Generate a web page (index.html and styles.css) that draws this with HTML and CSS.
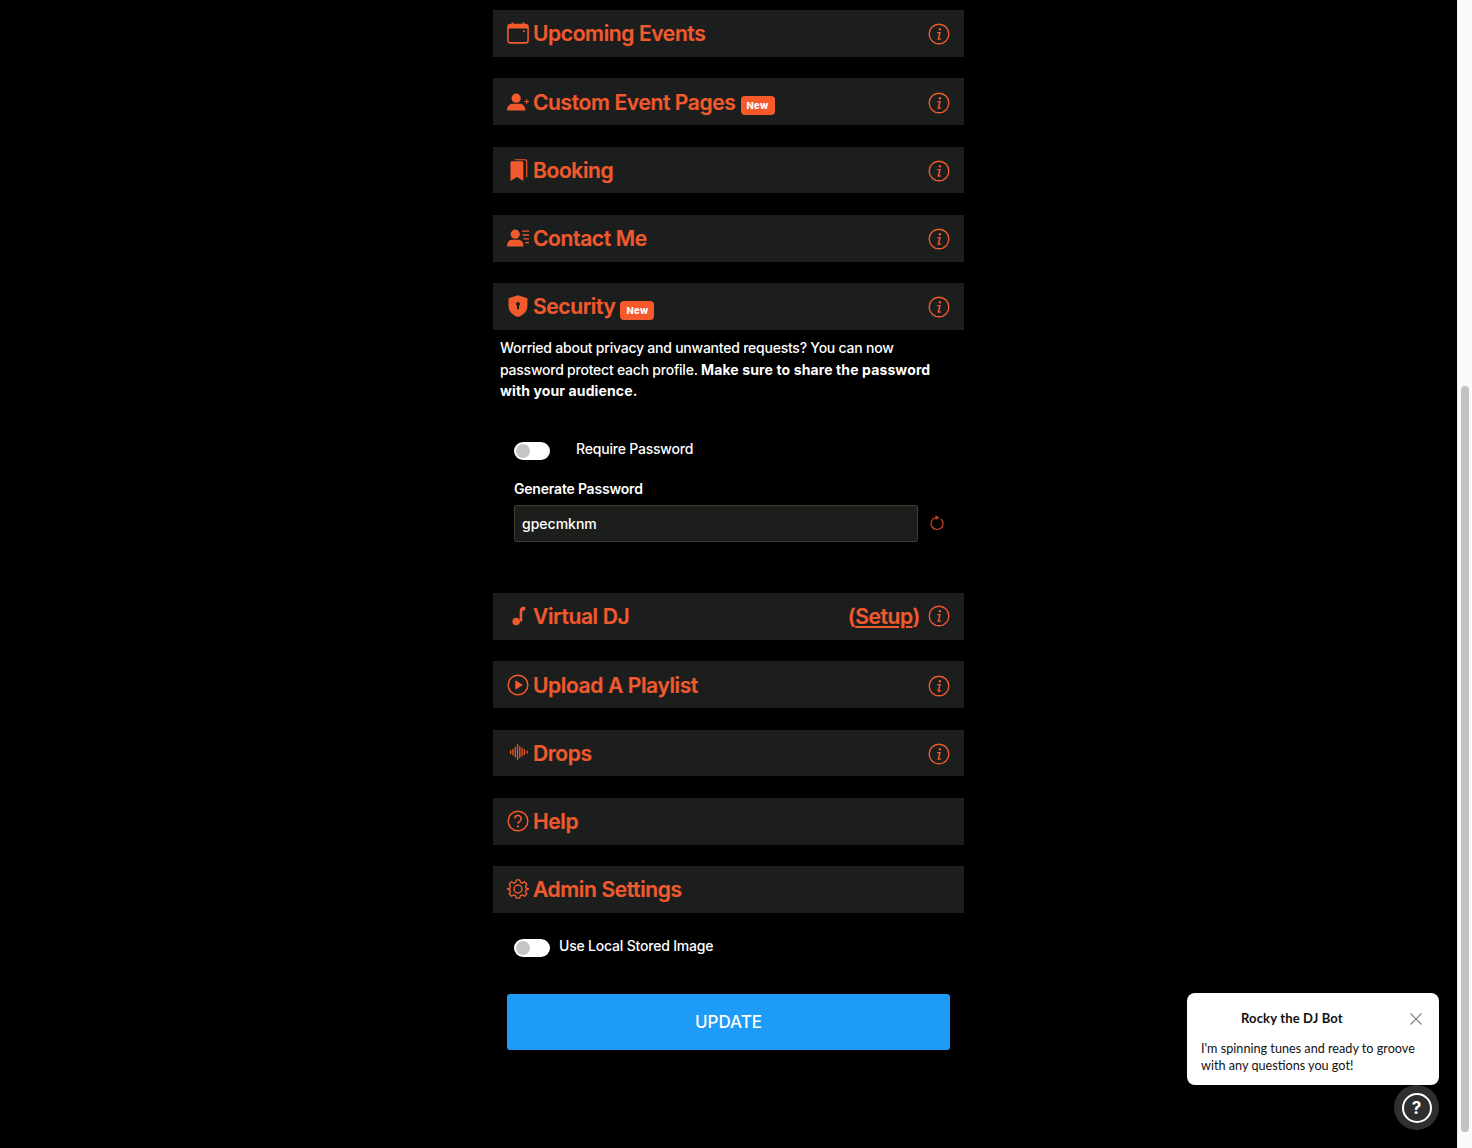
FILE: index.html
```html
<!DOCTYPE html>
<html lang="en">
<head>
<meta charset="utf-8">
<title>Profile settings</title>
<link rel="stylesheet" href="styles.css">
</head>
<body>
<div class="app">
  <main class="page">
    <div class="column">
      <section class="row">
        <div class="row-title">
          <svg class="ico" viewBox="0 0 24 24"><rect x="1" y="3" width="22" height="19.800" rx="2.500" fill="none" stroke="currentColor" stroke-width="1.700"/><path d="M1 7V4.500A2.500 2.500 0 0 1 3.500 2H5V.5h2V2h10V.5h2V2h1.500A2.500 2.500 0 0 1 23 4.500V7z" fill="currentColor"/><circle cx="18.500" cy="10" r="1.100" fill="currentColor"/></svg>
          <h2>Upcoming Events</h2>
        </div>
        <svg class="info" viewBox="0 0 24 24"><circle cx="12" cy="12" r="10.700" fill="none" stroke="currentColor" stroke-width="1.500"/><circle cx="13" cy="6.800" r="1.300" fill="currentColor"/><path d="M10 10.500h3l-1.700 7h2.600" fill="none" stroke="currentColor" stroke-width="1.600"/></svg>
      </section>
      <section class="row">
        <div class="row-title">
          <svg class="ico" viewBox="0 0 24 24"><circle cx="10" cy="7.800" r="5" fill="currentColor"/><path d="M0 21.300c0-5 3-7.500 6-7.500h8c3 0 6 2.500 6 7.500z" fill="currentColor"/><path d="M19 11.500h5M21.500 9v5" stroke="currentColor" stroke-width="1.200"/></svg>
          <h2>Custom Event Pages</h2>
          <span class="badge">New</span>
        </div>
        <svg class="info" viewBox="0 0 24 24"><circle cx="12" cy="12" r="10.700" fill="none" stroke="currentColor" stroke-width="1.500"/><circle cx="13" cy="6.800" r="1.300" fill="currentColor"/><path d="M10 10.500h3l-1.700 7h2.600" fill="none" stroke="currentColor" stroke-width="1.600"/></svg>
      </section>
      <section class="row">
        <div class="row-title">
          <svg class="ico" viewBox="0 0 24 24"><path d="M3.800 4a1.500 1.500 0 0 1 1.500-1.500h11a1.500 1.500 0 0 1 1.500 1.500v20l-7-4.500-7 4.500z" fill="currentColor"/><path d="M8.500 .8h11.500a1.500 1.500 0 0 1 1.500 1.500V20" fill="none" stroke="currentColor" stroke-width="1.300"/></svg>
          <h2>Booking</h2>
        </div>
        <svg class="info" viewBox="0 0 24 24"><circle cx="12" cy="12" r="10.700" fill="none" stroke="currentColor" stroke-width="1.500"/><circle cx="13" cy="6.800" r="1.300" fill="currentColor"/><path d="M10 10.500h3l-1.700 7h2.600" fill="none" stroke="currentColor" stroke-width="1.600"/></svg>
      </section>
      <section class="row">
        <div class="row-title">
          <svg class="ico" viewBox="0 0 24 24"><circle cx="9" cy="7.800" r="5" fill="currentColor"/><path d="M0 21.300c0-5 2.500-7.500 5.500-7.500h7c3 0 5.500 2.500 5.500 7.500z" fill="currentColor"/><path d="M16.500 4.500H24M17 8.700h7M18 12.900h6M20 17.100h4" stroke="currentColor" stroke-width="1.500"/></svg>
          <h2>Contact Me</h2>
        </div>
        <svg class="info" viewBox="0 0 24 24"><circle cx="12" cy="12" r="10.700" fill="none" stroke="currentColor" stroke-width="1.500"/><circle cx="13" cy="6.800" r="1.300" fill="currentColor"/><path d="M10 10.500h3l-1.700 7h2.600" fill="none" stroke="currentColor" stroke-width="1.600"/></svg>
      </section>
      <section class="row">
        <div class="row-title">
          <svg class="ico" viewBox="0 0 24 24"><path fill-rule="evenodd" d="M12 .3l10.300 3.200v8.500c0 5.700-4.200 9.800-10.300 12C5.900 21.800 1.700 17.700 1.700 12V3.500zM12 7.500a2.300 2.300 0 0 0-1.100 4.300V15.500h2.200v-3.700A2.300 2.300 0 0 0 12 7.500z" fill="currentColor"/></svg>
          <h2>Security</h2>
          <span class="badge">New</span>
        </div>
        <svg class="info" viewBox="0 0 24 24"><circle cx="12" cy="12" r="10.700" fill="none" stroke="currentColor" stroke-width="1.500"/><circle cx="13" cy="6.800" r="1.300" fill="currentColor"/><path d="M10 10.500h3l-1.700 7h2.600" fill="none" stroke="currentColor" stroke-width="1.600"/></svg>
      </section>

      <div class="security">
        <p class="intro">Worried about privacy and unwanted requests? You can now password protect each profile. <strong>Make sure to share the password with your audience.</strong></p>
        <div class="toggle-line wide">
          <span class="switch"><span class="knob"></span></span>
          <span class="toggle-label">Require Password</span>
        </div>
        <label class="field-label" for="pw">Generate Password</label>
        <div class="field-line">
          <input id="pw" class="field" type="text" value="gpecmknm">
          <svg class="refresh" viewBox="0 0 16 16"><path d="M6.500 2.700A6 6 0 1 0 12 4" fill="none" stroke="currentColor" stroke-width="1.200"/><path d="M6.500 .3L10.300 2.700 6.500 5z" fill="currentColor"/></svg>
        </div>
      </div>

      <section class="row">
        <div class="row-title">
          <svg class="ico" viewBox="0 0 24 24"><circle cx="10" cy="18" r="4.100" fill="currentColor"/><path d="M13.800 18V7C13.800 3.800 15.300 2 18 2h2v3.600h-1.400c-1.300 0-2 .8-2 2.200V18z" fill="currentColor"/></svg>
          <h2>Virtual DJ</h2>
        </div>
        <div class="row-end">
          <span class="setup">(<a href="#setup">Setup</a>)</span>
          <svg class="info" viewBox="0 0 24 24"><circle cx="12" cy="12" r="10.700" fill="none" stroke="currentColor" stroke-width="1.500"/><circle cx="13" cy="6.800" r="1.300" fill="currentColor"/><path d="M10 10.500h3l-1.700 7h2.600" fill="none" stroke="currentColor" stroke-width="1.600"/></svg>
        </div>
      </section>
      <section class="row">
        <div class="row-title">
          <svg class="ico" viewBox="0 0 24 24"><circle cx="12" cy="12" r="10.700" fill="none" stroke="currentColor" stroke-width="1.600"/><path d="M9 6.800l8.500 5.200L9 17.200z" fill="currentColor"/></svg>
          <h2>Upload A Playlist</h2>
        </div>
        <svg class="info" viewBox="0 0 24 24"><circle cx="12" cy="12" r="10.700" fill="none" stroke="currentColor" stroke-width="1.500"/><circle cx="13" cy="6.800" r="1.300" fill="currentColor"/><path d="M10 10.500h3l-1.700 7h2.600" fill="none" stroke="currentColor" stroke-width="1.600"/></svg>
      </section>
      <section class="row">
        <div class="row-title">
          <svg class="ico" viewBox="0 0 24 24"><path d="M4 9.500v3M6.500 8v6M9 6v10M11.500 3v16M14 5v12M16.500 7v8M19 8.500v5M22 10v2" stroke="currentColor" stroke-width="1.400" stroke-linecap="round" fill="none"/></svg>
          <h2>Drops</h2>
        </div>
        <svg class="info" viewBox="0 0 24 24"><circle cx="12" cy="12" r="10.700" fill="none" stroke="currentColor" stroke-width="1.500"/><circle cx="13" cy="6.800" r="1.300" fill="currentColor"/><path d="M10 10.500h3l-1.700 7h2.600" fill="none" stroke="currentColor" stroke-width="1.600"/></svg>
      </section>
      <section class="row">
        <div class="row-title">
          <svg class="ico" viewBox="0 0 24 24"><circle cx="12" cy="12" r="10.700" fill="none" stroke="currentColor" stroke-width="1.600"/><path d="M8.500 9.300a3.500 3.500 0 1 1 5.400 2.900c-1.300.8-1.900 1.400-1.900 2.800" fill="none" stroke="currentColor" stroke-width="1.800"/><circle cx="12" cy="18" r="1.200" fill="currentColor"/></svg>
          <h2>Help</h2>
        </div>
      </section>
      <section class="row">
        <div class="row-title">
          <svg class="ico" viewBox="0 0 24 24"><path d="M10 1h4l.9 3.100 2.100.9 2.800-1.600 2.800 2.800-1.600 2.800.9 2.100L25 12l-3.100.9-.9 2.100 1.600 2.800-2.800 2.800-2.800-1.600-2.100.9L14 23h-4l-.9-3.100-2.100-.9-2.800 1.600-2.800-2.800L3 15l-.9-2.100L-1 12l3.100-.9.900-2.100-1.600-2.800 2.800-2.800L7 5l2.100-.9z" transform="translate(1.100 1.100) scale(.908)" fill="none" stroke="currentColor" stroke-width="1.700" stroke-linejoin="round"/><circle cx="12" cy="12" r="4.300" fill="none" stroke="currentColor" stroke-width="1.600"/></svg>
          <h2>Admin Settings</h2>
        </div>
      </section>

      <div class="toggle-line local">
        <span class="switch"><span class="knob"></span></span>
        <span class="toggle-label">Use Local Stored Image</span>
      </div>
      <button class="update" type="button">UPDATE</button>
    </div>
  </main>
  <aside class="scrollbar"><span class="thumb"></span></aside>
</div>

<div class="chat-pop">
  <div class="chat-head">
    <strong>Rocky the DJ Bot</strong>
    <svg class="chat-close" viewBox="0 0 14 14"><path d="M1.500 1.500l11 11M12.500 1.500l-11 11" stroke="currentColor" stroke-width="1.300" fill="none"/></svg>
  </div>
  <p>I'm spinning tunes and ready to groove with any questions you got!</p>
</div>
<button class="chat-btn" type="button" aria-label="Help"><span>?</span></button>
</body>
</html>
```

FILE: styles.css
```css
* { box-sizing: border-box; }
html, body { margin: 0; height: 100%; overflow: hidden; background: #000; }
body { font-family: Inter, "Liberation Sans", sans-serif; color: #fff; }

.app { display: flex; height: 1148px; }
.page { flex: 1; display: flex; justify-content: center; padding-top: 10px; }
.column { width: 471px; display: flex; flex-direction: column; gap: 21.5px; }

.scrollbar { width: 15px; background: #fafafa; border-left: 1px solid #ececec; padding: 386px 3px 0 3px; }
.thumb { display: block; height: 746px; background: #c2c2c2; border-radius: 5px; }

.row {
  flex: none;
  height: 46.75px;
  background: #1c1e1e;
  color: #f05a2d;
  padding: 0 14px;
  display: flex;
  align-items: center;
  justify-content: space-between;
}
.row-title { display: flex; align-items: center; }
.row-title h2 { margin: 0; font-size: 21px; font-weight: 600; letter-spacing: -0.37px; line-height: 26px; position: relative; top: 1px; -webkit-text-stroke: 0.2px currentColor; }
.ico { width: 22px; height: 22px; margin-right: 4px; flex: none; }
.info { width: 22px; height: 22px; flex: none; position: relative; top: 1px; }
.badge {
  background: #f6592a;
  color: #fff;
  font-size: 9.500px;
  font-weight: 800;
  letter-spacing: 0.3px;
  border-radius: 4px;
  height: 19px;
  width: 34px;
  margin-left: 5px;
  display: flex;
  align-items: center;
  justify-content: center;
  position: relative;
  top: 4px;
}
.row-end { display: flex; align-items: center; gap: 8px; }
.row-end .info { top: -0.5px; }
.setup { font-size: 21px; font-weight: 600; letter-spacing: -0.37px; -webkit-text-stroke: 0.2px currentColor; }
.setup a { color: inherit; text-decoration: underline; }

.security { flex: none; height: 241.75px; margin-top: -21.5px; padding: 7.250px 0 0 7px; }
.intro { margin: 0; font-size: 14px; line-height: 21.500px; width: 440px; font-weight: 500; letter-spacing: -0.23px; }
.intro strong { font-weight: 700; letter-spacing: 0.12px; }
.toggle-line { display: flex; align-items: center; font-size: 14px; font-weight: 500; letter-spacing: -0.2px; }
.toggle-line.wide { margin: 37.750px 0 0 14px; gap: 26px; height: 22px; }
.toggle-line.local { margin: 1.500px 0 0 21px; gap: 9px; height: 22px; flex: none; }
.toggle-label { position: relative; top: -1.500px; }
.switch { width: 36px; height: 18px; border-radius: 9px; background: #fff; padding: 2px; display: block; position: relative; top: 1px; }
.knob { display: block; width: 14px; height: 14px; border-radius: 50%; background: #c6c6c6; }
.field-label { display: block; margin: 19px 0 8px 14px; font-size: 14px; font-weight: 600; letter-spacing: -0.2px; line-height: 17px; }
.field-line { display: flex; align-items: center; margin-left: 14px; }
.field {
  width: 404px;
  height: 37px;
  background: #1c1e1c;
  border: 1px solid #3c3c34;
  border-radius: 2px;
  color: #fff;
  font: 500 14px Inter, "Liberation Sans", sans-serif;
  padding: 0 7px;
}
.refresh { width: 16px; height: 16px; margin-left: 11px; color: #c8402a; position: relative; top: -0.5px; }

.update {
  width: 443px;
  height: 56px;
  margin: 14.750px 0 0 14px;
  flex: none;
  border: 0;
  border-radius: 3px;
  background: #1d9bf7;
  color: #fff;
  font: 500 17px Inter, "Liberation Sans", sans-serif;
}

.chat-pop {
  position: absolute;
  left: 1187px;
  top: 993px;
  width: 252px;
  height: 92px;
  background: #fff;
  border-radius: 8px;
  color: #111;
  padding: 0 14px;
  font-family: Lato, "Open Sans", sans-serif;
}
.chat-head { height: 50px; display: flex; align-items: center; justify-content: space-between; padding: 0 2px 0 40px; font-size: 13px; }
.chat-head strong { font-weight: 700; letter-spacing: 0.15px; }
.chat-close { width: 14px; height: 14px; color: #8a8a8a; position: relative; top: 1px; }
.chat-pop p { margin: -2px 0 0; font-size: 12.650px; line-height: 16.500px; }
.chat-btn {
  position: absolute;
  left: 1394px;
  top: 1085px;
  width: 45px;
  height: 45px;
  border-radius: 50%;
  border: 0;
  background: #2f2f2f;
  padding: 0;
  display: flex;
  align-items: center;
  justify-content: center;
}
.chat-btn span {
  width: 30px;
  height: 30px;
  border: 2px solid #fff;
  border-radius: 50%;
  color: #fff;
  font: 700 17px/26px Inter, sans-serif;
  text-align: center;
}
```
